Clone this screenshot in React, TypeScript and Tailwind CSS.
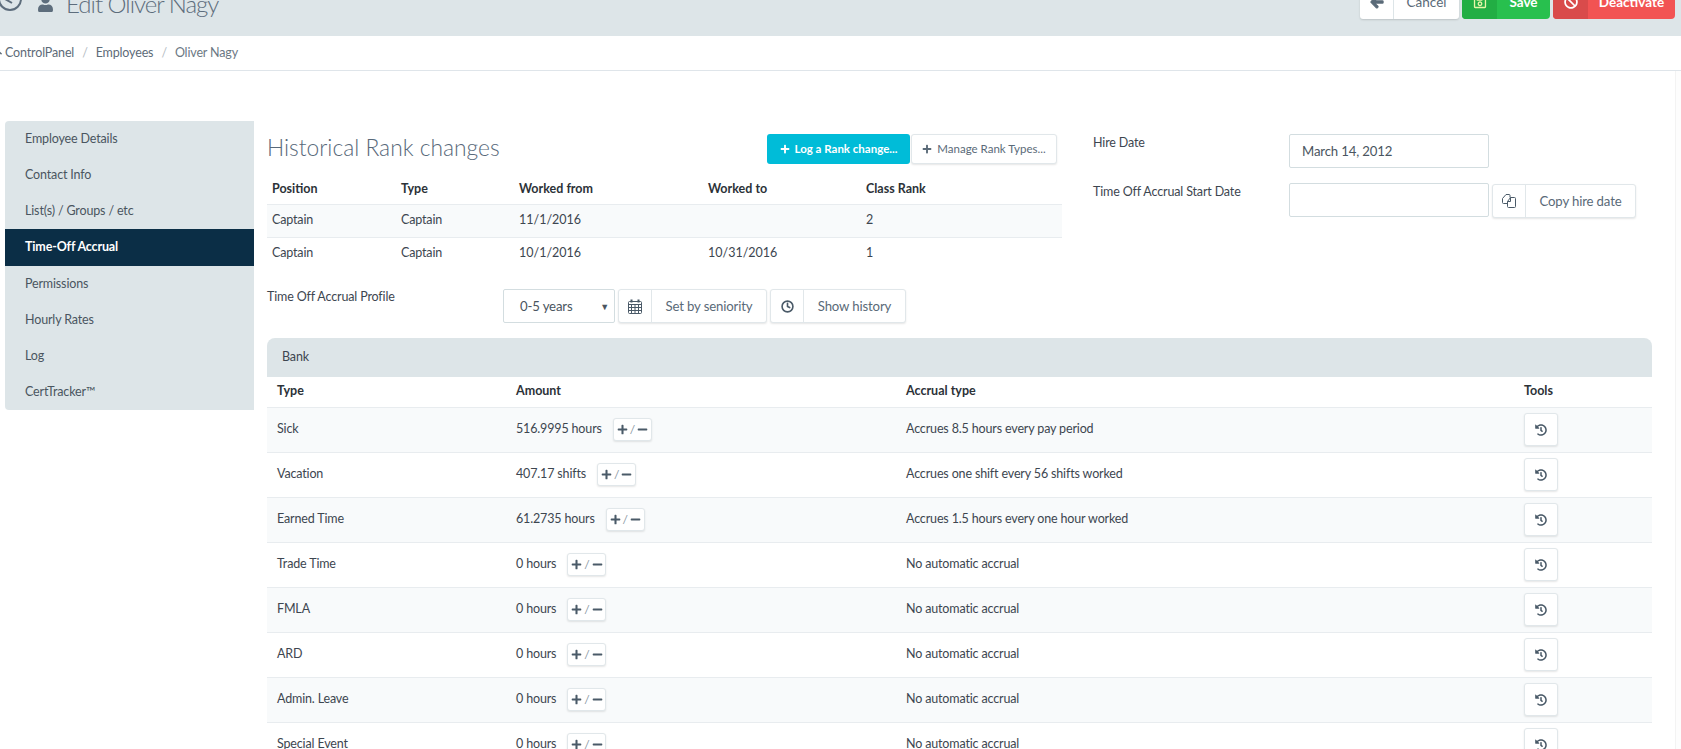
import { FaArrowLeft, FaBan, FaHistory, FaMinus, FaPlus, FaRegSave, FaUser, FaHome } from "react-icons/fa";
import { FiClock } from "react-icons/fi";
import type { ReactNode } from "react";

const menu = ["Employee Details", "Contact Info", "List(s) / Groups / etc", "Time-Off Accrual", "Permissions", "Hourly Rates", "Log", "CertTracker™"];

const ranks = [
  { position: "Captain", type: "Captain", from: "11/1/2016", to: "", rank: "2" },
  { position: "Captain", type: "Captain", from: "10/1/2016", to: "10/31/2016", rank: "1" },
];

const bank = [
  { type: "Sick", amount: "516.9995 hours", accrual: "Accrues 8.5 hours every pay period" },
  { type: "Vacation", amount: "407.17 shifts", accrual: "Accrues one shift every 56 shifts worked" },
  { type: "Earned Time", amount: "61.2735 hours", accrual: "Accrues 1.5 hours every one hour worked" },
  { type: "Trade Time", amount: "0 hours", accrual: "No automatic accrual" },
  { type: "FMLA", amount: "0 hours", accrual: "No automatic accrual" },
  { type: "ARD", amount: "0 hours", accrual: "No automatic accrual" },
  { type: "Admin. Leave", amount: "0 hours", accrual: "No automatic accrual" },
  { type: "Special Event", amount: "0 hours", accrual: "No automatic accrual" },
];

const CalendarIcon = () => (
  <svg width="14" height="15" viewBox="0 0 14 15" fill="none" stroke="currentColor" strokeWidth="1">
    <rect x="0.5" y="2.5" width="13" height="12" rx="1" />
    <path d="M0.5 5.5h13M0.5 8.5h13M0.5 11.5h13M3.5 5.5v9M7 5.5v9M10.5 5.5v9" />
    <path d="M3.5 0.5v3M10.5 0.5v3" strokeWidth="2" />
  </svg>
);

const CopyIcon = () => (
  <svg width="14" height="14" viewBox="0 0 14 14" fill="none" stroke="currentColor" strokeWidth="1">
    <path d="M5.5 9.5h-4a1 1 0 0 1-1-1v-4l3.5-4h3a1 1 0 0 1 1 1v2" />
    <path d="M8.5 3.5h4a1 1 0 0 1 1 1v8a1 1 0 0 1-1 1h-6a1 1 0 0 1-1-1v-5z" fill="white" />
    <path d="M8.5 3.5v4h-3" />
  </svg>
);

const IconButton = ({ icon, label, className }: { icon: ReactNode; label: string; className: string }) => (
  <div className={`flex h-[34px] items-stretch rounded-[3px] border border-[#e1e7ea] bg-white text-[13.2px] text-[#5a6a78] shadow-[0_1px_2px_rgba(0,0,0,0.1)] ${className}`}>
    <span className="flex w-[33px] shrink-0 items-center justify-center border-r border-[#e1e7ea] text-[13px] text-[#4a5a68]">{icon}</span>
    <span className="flex flex-1 items-center justify-center pt-[1px] whitespace-nowrap">{label}</span>
  </div>
);

const App = () => {
  return (
    <div className="h-[749px] w-[1681px] overflow-hidden bg-white font-['Lato','Noto_Sans',sans-serif] text-[12.5px] tracking-[-0.15px] text-[#3d4650]">
      <header className="flex h-[36px] items-end justify-between overflow-hidden bg-[#dde5e8]">
        <div className="flex h-[36px] items-start text-[#5d6d7c]">
          <svg className="-mt-[13px] -ml-[2px]" width="24" height="24" viewBox="0 0 24 24" fill="none" stroke="currentColor" strokeWidth="2">
            <circle cx="12" cy="12" r="11" />
            <path d="M7 12l7 4" />
          </svg>
          <FaUser className="-mt-[5px] ml-[15px] text-[17px]" />
          <span className="-mt-[14px] ml-[12px] text-[24px] font-light tracking-[-1px] whitespace-nowrap">Edit Oliver Nagy</span>
        </div>
        <div className="mr-[6px] mb-[17px] flex gap-[3px] text-[13.5px] tracking-normal">
          <div className="flex h-[34px] w-[99px] items-stretch overflow-hidden rounded-b-[3px] bg-white text-[#5a6a78] shadow-[0_1px_2px_rgba(0,0,0,0.15)]">
            <span className="flex w-[34px] items-center justify-center border-r border-[#dde5e8] text-[14px]"><FaArrowLeft className="stroke-current stroke-[40]" /></span>
            <span className="flex flex-1 items-center justify-center">Cancel</span>
          </div>
          <div className="flex h-[34px] w-[88px] items-stretch overflow-hidden rounded-b-[4px] bg-[#28c04e] font-bold text-white">
            <span className="flex w-[35px] items-center justify-center bg-[#22ae44] text-[14px] text-[#e8f5a8]"><FaRegSave /></span>
            <span className="flex flex-1 items-center justify-center">Save</span>
          </div>
          <div className="flex h-[34px] w-[122px] items-stretch overflow-hidden rounded-b-[4px] bg-[#f25353] font-bold text-white">
            <span className="flex w-[35px] items-center justify-center bg-[#d94b4b] text-[14px]"><FaBan /></span>
            <span className="flex flex-1 items-center justify-center">Deactivate</span>
          </div>
        </div>
      </header>

      <nav className="flex h-[35px] items-center gap-[8px] border-b border-[#dfe5ea] text-[#5d6b78]">
        <FaHome className="-ml-[11px] text-[13px] text-[#5d6b78]" />
        <span className="-ml-[5px]">ControlPanel</span>
        <span className="text-[#b5bdc4]">/</span>
        <span>Employees</span>
        <span className="text-[#b5bdc4]">/</span>
        <span className="text-[#6c7884]">Oliver Nagy</span>
      </nav>

      <div className="flex h-[678px] items-start pt-[50px] pl-[5px]">
        <aside className="w-[249px] shrink-0 overflow-hidden rounded-tl-[4px] rounded-bl-[4px] bg-[#dde5e8]">
          {menu.map((item) => (
            <div
              key={item}
              className={`flex items-center pl-[20px] ${
                item === "Time-Off Accrual" ? "h-[37px] bg-[#0b2e46] font-bold text-white" : "h-[36px] text-[#4a5560]"
              }`}
            >
              {item}
            </div>
          ))}
        </aside>

        <main className="ml-[13px] w-[1385px] shrink-0">
          <div className="flex">
            <section className="w-[795px] shrink-0 pt-[13px]">
              <div className="flex h-[41px] items-start justify-between">
                <h2 className="-mt-[2px] text-[22.8px] leading-[30px] font-light tracking-normal text-[#58697a]">Historical Rank changes</h2>
                <div className="mr-[5px] flex gap-[1px] text-[11.5px] tracking-normal">
                  <div className="flex h-[30px] w-[143px] items-center justify-center gap-[5px] rounded-[3px] bg-[#00bcd8] font-bold text-white">
                    <FaPlus className="text-[10px]" />
                    Log a Rank change...
                  </div>
                  <div className="flex h-[30px] w-[146px] items-center justify-center gap-[5px] rounded-[3px] border border-[#e1e7ea] bg-white text-[#5a6a78] shadow-[0_1px_2px_rgba(0,0,0,0.1)]">
                    <FaPlus className="text-[10px]" />
                    Manage Rank Types...
                  </div>
                </div>
              </div>
              <table className="w-full table-fixed border-collapse">
                <colgroup>
                  <col className="w-[129px]" />
                  <col className="w-[118px]" />
                  <col className="w-[189px]" />
                  <col className="w-[158px]" />
                  <col />
                </colgroup>
                <thead>
                  <tr className="h-[29px] text-left tracking-normal text-[#2c3238]">
                    {["Position", "Type", "Worked from", "Worked to", "Class Rank"].map((h) => (
                      <th key={h} className="px-[5px] font-bold">{h}</th>
                    ))}
                  </tr>
                </thead>
                <tbody>
                  {ranks.map((r, i) => (
                    <tr key={r.from} className={`h-[33px] border-t border-[#e8ecef] ${i === 0 ? "bg-[#f8fafb]" : ""}`}>
                      <td className="px-[5px]">{r.position}</td>
                      <td className="px-[5px]">{r.type}</td>
                      <td className="px-[5px] tracking-normal">{r.from}</td>
                      <td className="px-[5px] tracking-normal">{r.to}</td>
                      <td className="px-[5px]">{r.rank}</td>
                    </tr>
                  ))}
                </tbody>
              </table>
            </section>

            <section className="ml-[31px] flex-1 pt-[13px]">
              <div className="flex h-[49px]">
                <label className="w-[196px]">Hire Date</label>
                <div className="flex h-[34px] w-[200px] items-center rounded-[2px] border border-[#d3dde0] pt-[1px] pl-[12px] text-[13.2px] text-[#4a5560]">March 14, 2012</div>
              </div>
              <div className="flex">
                <label className="w-[196px]">Time Off Accrual Start Date</label>
                <div className="h-[34px] w-[200px] rounded-[2px] border border-[#d3dde0]" />
                <IconButton icon={<CopyIcon />} label="Copy hire date" className="mt-[1px] ml-[3px] w-[144px]" />
              </div>
            </section>
          </div>

          <div className="mt-[19px] flex">
            <label className="w-[236px] -mt-[1px]">Time Off Accrual Profile</label>
            <div className="flex h-[34px] w-[112px] items-center justify-between rounded-[2px] border border-[#d3dde0] pt-[1px] pr-[5px] pl-[16px] text-[13.2px] text-[#4a5560]">
              <span>0-5 years</span>
              <span className="text-[9px]">▼</span>
            </div>
            <IconButton icon={<CalendarIcon />} label="Set by seniority" className="ml-[3px] w-[149px]" />
            <IconButton icon={<FiClock className="stroke-[3px]" />} label="Show history" className="ml-[3px] w-[136px]" />
          </div>

          <div className="mt-[15px] flex h-[39px] items-center rounded-t-[8px] bg-[#dde5e8] pl-[15px]">Bank</div>
          <table className="w-full table-fixed border-collapse">
            <colgroup>
              <col className="w-[239px]" />
              <col className="w-[390px]" />
              <col className="w-[618px]" />
              <col />
            </colgroup>
            <thead>
              <tr className="h-[30px] text-left tracking-normal text-[#2c3238]">
                <th className="pl-[10px] font-bold">Type</th>
                <th className="pl-[10px] font-bold">Amount</th>
                <th className="pl-[10px] font-bold">Accrual type</th>
                <th className="pl-[10px] font-bold">Tools</th>
              </tr>
            </thead>
            <tbody>
              {bank.map((b, i) => (
                <tr key={b.type} className={`h-[45px] border-t border-[#e8ecef] ${i % 2 === 0 ? "bg-[#f8fafb]" : ""}`}>
                  <td className="pl-[10px]">{b.type}</td>
                  <td className="pl-[10px]">
                    <div className="flex items-center gap-[11px]">
                      <span>{b.amount}</span>
                      <span className="flex h-[23px] w-[39px] items-center justify-center gap-[2px] rounded-[3px] border border-[#e1e7ea] bg-white text-[#4a5a68] shadow-[0_1px_2px_rgba(0,0,0,0.1)]">
                        <FaPlus className="text-[11px]" />
                        <span className="text-[12px] text-[#8a97a3]">/</span>
                        <FaMinus className="text-[11px]" />
                      </span>
                    </div>
                  </td>
                  <td className="pl-[10px]">{b.accrual}</td>
                  <td className="pl-[10px]">
                    <span className="flex h-[33px] w-[34px] items-center justify-center rounded-[3px] border border-[#e1e7ea] bg-white text-[12px] text-[#4a5a68] shadow-[0_1px_2px_rgba(0,0,0,0.1)]">
                      <FaHistory />
                    </span>
                  </td>
                </tr>
              ))}
            </tbody>
          </table>
        </main>

        <div className="-mt-[50px] ml-auto h-[678px] w-[6px] shrink-0 border-l border-[#f3f3f3] bg-[#fdfdfd]" />
      </div>
    </div>
  );
};

export default App;
